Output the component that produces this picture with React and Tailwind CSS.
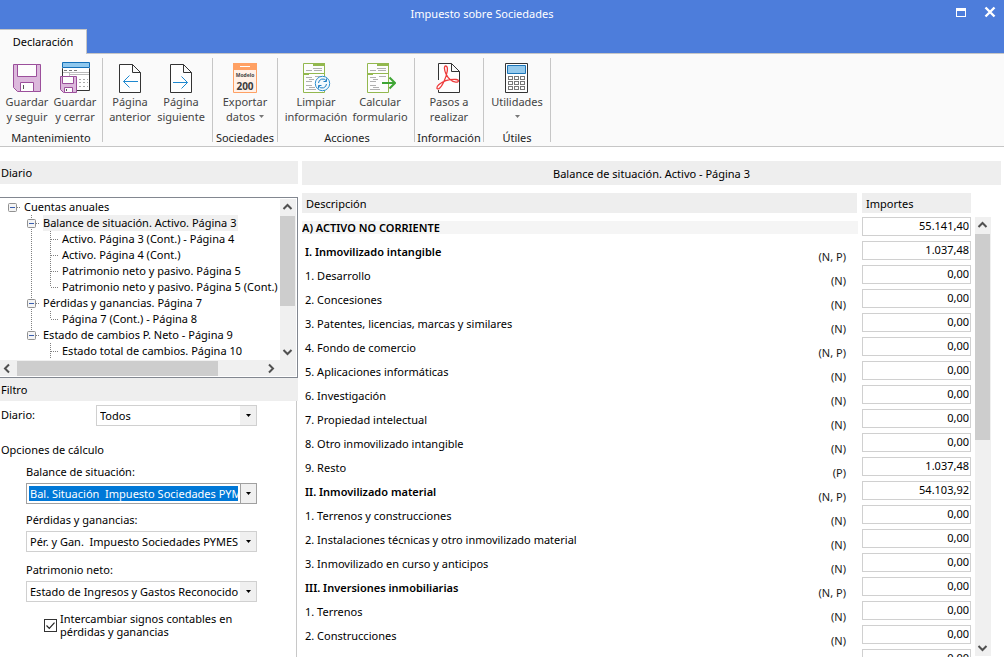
import React from "react";

/* ---------- Ribbon icons (32 × 32) ---------- */

function Icon({ children }) {
  return (
    <svg width="32" height="32" viewBox="0 0 32 32" fill="none" aria-hidden="true" className="shrink-0">
      {children}
    </svg>
  );
}

function SaveIcon() {
  return (
    <Icon>
      <path d="M2.500 2.500h27v27H6.500l-4-4z" fill="#dcb8dc" stroke="#9b4f9b" />
      <path d="M6.500 2.500h19v12h-19zM9.500 29.500v-9h13v9z" fill="#fdfdfd" stroke="#9b4f9b" />
      <path d="M12.500 23v4" stroke="#555" />
    </Icon>
  );
}

function SaveCloseIcon() {
  return (
    <Icon>
      <path d="M3.500 6.500h27v22h-27z" fill="#fff" stroke="#333" />
      <path d="M3.500 .5h27v5h-27z" fill="#8fc8ee" stroke="#1470b8" />
      <path d="M4 6h26v5H4z" fill="#fff" />
      <path d="M5 8.500h3m2 0h3m2 0h3" stroke="#777" />
      <path d="M4 10.500h26M10.500 11v4M11 12.500h19" stroke="#bbb" />
      <path d="M20 17.500h2m2 0h2m2 0h1M20 20.500h2m2 0h2m2 0h1M20 24.500h2m2 0h2m2 0h1" stroke="#aaa" />
      <path d="M1.500 14.500h16v16h-13l-3-3z" fill="#dcb8dc" stroke="#9b4f9b" />
      <path d="M3.500 14.500h11v7h-11zM5.500 30.500v-5h8v5z" fill="#fdfdfd" stroke="#9b4f9b" />
      <path d="M7.500 27v2" stroke="#555" />
    </Icon>
  );
}

function PageShape() {
  return <path d="M5.500 2.500h13l8 8v20h-21zM18.500 2.500v8h8" fill="#fefefe" stroke="#333" />;
}

function PrevPageIcon() {
  return (
    <Icon>
      <PageShape />
      <path d="M24 19.500H9.500M15.500 13.500l-6 6 6 6" stroke="#1e88cf" />
    </Icon>
  );
}

function NextPageIcon() {
  return (
    <Icon>
      <PageShape />
      <path d="M8 20.500h14.500M16.500 14.500l6 6-6 6" stroke="#1e88cf" />
    </Icon>
  );
}

function ModelIcon() {
  return (
    <Icon>
      <path d="M4.500 1.500h23v29h-23z" fill="#fff1e8" stroke="#ffa164" />
      <path d="M4 1h24v7H4z" fill="#ffa164" />
      <path d="M11 4.500h10" stroke="#fff" />
      <text x="16" y="15" textAnchor="middle" fontSize="5" fontWeight="700" fontFamily="Noto Sans, sans-serif" fill="#444">Modelo</text>
      <text x="16" y="28" textAnchor="middle" fontSize="10" fontWeight="700" fontFamily="Noto Sans, sans-serif" fill="#3c3c3c">200</text>
    </Icon>
  );
}

function FormShape() {
  return (
    <>
      <path d="M3.500 1.500h21v29h-21z" fill="#fdfdfd" stroke="#93b84f" />
      <path d="M13 1h12v3H13zM3 11h6v2H3zM3 11h22v1H3z" fill="#93b84f" />
      <path d="M13 6.500h9M6 8.500h6M14 8.500h8M6 15.500h6M15 14.500h7M9 17.500h5M6 19.500h6M6 23.500h6M9 25.500h6M6 27.500h10" stroke="#b0b0b0" />
    </>
  );
}

function CleanIcon() {
  return (
    <Icon>
      <FormShape />
      <circle cx="22.500" cy="21.500" r="7.200" fill="#f3f9fd" stroke="#2a8fd0" />
      <path d="M18.500 21a4.300 4.300 0 0 1 7.800-2.200M26.500 16.500v3h-3M26.500 22a4.300 4.300 0 0 1-7.800 2.200M18.500 26.500v-3h3" stroke="#1f7fc4" />
    </Icon>
  );
}

function CalcFormIcon() {
  return (
    <Icon>
      <FormShape />
      <path d="M18 21h13M25.500 15.500L31 21l-5.500 5.500" stroke="#3fa535" strokeWidth="2" />
    </Icon>
  );
}

function PdfIcon() {
  return (
    <Icon>
      <path d="M5.500 1.500h13l8 8v21h-21zM18.500 1.500v8h8" fill="#fefefe" stroke="#333" />
      <path d="M3 18h4v10H3z" fill="#fafafa" />
      <path
        d="M12.700 4C10.800 4 11.200 8 13 12c2 4 5.500 7.600 9.800 8.200 3.500.3 3.400-2.500.2-2.700-6-.3-13 1.700-17 5-3.300 2.800-2.300 5.300 0 4.200C9.500 24.500 13.500 14.500 14.300 9c.4-3.300-.2-5-1.600-5z"
        stroke="#ee3a3a"
        strokeWidth="1.300"
      />
    </Icon>
  );
}

function CalculatorIcon() {
  return (
    <Icon>
      <path d="M4.500 1.500h22v29h-22z" fill="#fefefe" stroke="#333" />
      <path d="M6.500 3.500h18v8h-18z" fill="#94c9ec" stroke="#1b75b8" />
      {[14.5, 19.5, 24.5].map((y) =>
        [7.5, 13.5, 19.5].map((x) => <rect key={`${x}-${y}`} x={x} y={y} width="4" height="3" stroke="#777" />)
      )}
    </Icon>
  );
}

/* ---------- Small glyphs ---------- */

function Caret({ className }) {
  return (
    <svg width="5" height="3" viewBox="0 0 5 3" aria-hidden="true" className={className}>
      <path d="M0 0h5L2.500 3z" fill="currentColor" />
    </svg>
  );
}

const chevrons = {
  up: "M1.500 7l4-4 4 4",
  down: "M1.500 4l4 4 4-4",
  left: "M7 1.500l-4 4 4 4",
  right: "M4 1.500l4 4-4 4",
};

function ScrollArrow({ dir, label }) {
  return (
    <button type="button" aria-label={label} className="flex h-[17px] w-[15px] shrink-0 items-center justify-center">
      <svg width="11" height="11" viewBox="0 0 11 11" fill="none" aria-hidden="true">
        <path d={chevrons[dir]} stroke="#505050" strokeWidth="2" />
      </svg>
    </button>
  );
}

/* ---------- Ribbon ---------- */

const groups = [
  {
    name: "Mantenimiento",
    className: "px-[3px]",
    items: [
      { lines: ["Guardar", "y seguir"], icon: SaveIcon, width: "w-12" },
      { lines: ["Guardar", "y cerrar"], icon: SaveCloseIcon, width: "w-12" },
    ],
  },
  {
    name: "",
    className: "pl-px pr-[6px]",
    items: [
      { lines: ["Página", "anterior"], icon: PrevPageIcon, width: "w-[52px]" },
      { lines: ["Página", "siguiente"], icon: NextPageIcon, width: "w-[50px]" },
    ],
  },
  {
    name: "Sociedades",
    className: "",
    items: [{ lines: ["Exportar", "datos"], icon: ModelIcon, width: "w-16", menu: true }],
  },
  {
    name: "Acciones",
    className: "pl-[5px] pr-[3px]",
    items: [
      { lines: ["Limpiar", "información"], icon: CleanIcon, width: "w-[66px]" },
      { lines: ["Calcular", "formulario"], icon: CalcFormIcon, width: "w-[62px]" },
    ],
  },
  {
    name: "Información",
    className: "",
    items: [{ lines: ["Pasos a", "realizar"], icon: PdfIcon, width: "w-[68px]" }],
  },
  {
    name: "Útiles",
    className: "",
    items: [{ lines: ["Utilidades", ""], icon: CalculatorIcon, width: "w-[66px]", menu: true }],
  },
];

function RibbonButton({ item }) {
  const Glyph = item.icon;
  return (
    <button type="button" className={`flex flex-col items-center text-[#444] ${item.width}`}>
      <Glyph />
      <span className="whitespace-nowrap leading-[15px]">{item.lines[0]}</span>
      <span className="flex h-[15px] items-center gap-1 whitespace-nowrap leading-[15px]">
        {item.lines[1] && <span>{item.lines[1]}</span>}
        {item.menu && <Caret className="text-[#777]" />}
      </span>
    </button>
  );
}

function Ribbon() {
  return (
    <div className="flex h-[93px] shrink-0 border-b border-[#c6c6c6] bg-[#fafafa]">
      {groups.map((g, i) => (
        <section key={i} className="flex">
          <div className={`flex flex-col items-center pt-2 ${g.className}`}>
            <div className="flex">
              {g.items.map((item) => (
                <RibbonButton key={item.lines.join(" ")} item={item} />
              ))}
            </div>
            <h2 className="mt-[7px] whitespace-nowrap leading-[14px] text-[#222]">{g.name}</h2>
          </div>
          <div className="my-1 w-px bg-[#c6c6c6]" />
        </section>
      ))}
    </div>
  );
}

/* ---------- Tree ---------- */

const treeRows = [
  { text: "Cuentas anuales", cells: ["root"] },
  { text: "Balance de situación. Activo. Página 3", cells: ["", "box"], selected: true },
  { text: "Activo. Página 3 (Cont.) - Página 4", cells: ["", "line", "leaf"] },
  { text: "Activo. Página 4 (Cont.)", cells: ["", "line", "leaf"] },
  { text: "Patrimonio neto y pasivo. Página 5", cells: ["", "line", "leaf"] },
  { text: "Patrimonio neto y pasivo. Página 5 (Cont.)", cells: ["", "line", "last"] },
  { text: "Pérdidas y ganancias. Página 7", cells: ["", "box"] },
  { text: "Página 7 (Cont.) - Página 8", cells: ["", "line", "last"] },
  { text: "Estado de cambios P. Neto - Página 9", cells: ["", "lastbox"] },
  { text: "Estado total de cambios. Página 10", cells: ["", "", "leaf"] },
];

function TreeCell({ kind }) {
  const lines = {
    root: "M12 8.500h4",
    box: "M7.500 0v16M12 8.500h4",
    lastbox: "M7.500 0v4M12 8.500h4",
    line: "M7.500 0v16",
    leaf: "M7.500 0v16M8 8.500h8",
    last: "M7.500 0v8M8 8.500h8",
  };
  const hasBox = kind === "root" || kind === "box" || kind === "lastbox";
  return (
    <svg width="19" height="16" viewBox="0 0 19 16" fill="none" aria-hidden="true" className="shrink-0">
      {kind && <path d={lines[kind]} stroke="#808080" strokeDasharray="1 1" />}
      {hasBox && (
        <>
          <rect x="3.500" y="4.500" width="8" height="8" rx="1" fill="#f4f4f4" stroke="#919191" />
          <path d="M5 8.500h5" stroke="#3b5fae" />
        </>
      )}
    </svg>
  );
}

function Tree() {
  return (
    <div className="mt-[13px] border-y border-r border-[#828790] bg-white pt-px pr-px pb-px">
      <div className="flex">
        <ul role="tree" aria-label="Diario" className="h-[161px] min-w-0 flex-1 overflow-hidden pl-[5px]">
          {treeRows.map((row) => (
            <li key={row.text} role="treeitem" aria-level={row.cells.length} aria-selected={!!row.selected} className="flex h-4 whitespace-nowrap">
              {row.cells.map((kind, i) => (
                <TreeCell key={i} kind={kind} />
              ))}
              <span className={row.selected ? "bg-[#f0f0f0] pr-[2px] leading-4" : "leading-4"}>{row.text}</span>
            </li>
          ))}
        </ul>
        <div className="flex w-4 flex-col bg-[#f0f0f0]">
          <ScrollArrow dir="up" label="Subir" />
          <div className="h-[90px] w-[15px] bg-[#cdcdcd]" />
          <div className="flex-1" />
          <ScrollArrow dir="down" label="Bajar" />
        </div>
      </div>
      <div className="flex h-4 items-center bg-[#f0f0f0]">
        <ScrollArrow dir="left" label="Izquierda" />
        <div className="ml-[2px] h-[15px] w-[201px] bg-[#cdcdcd]" />
        <div className="flex-1" />
        <ScrollArrow dir="right" label="Derecha" />
        <div className="w-[18px]" />
      </div>
    </div>
  );
}

/* ---------- Filter ---------- */

function Combo({ id, value, active, className = "" }) {
  return (
    <div className={`flex h-[21px] border ${active ? "border-[#a0a0a0]" : "border-[#d0d0d0]"} bg-white ${className}`}>
      <select
        id={id}
        defaultValue={value}
        className={
          active
            ? "my-[2px] mr-[2px] ml-[2px] min-w-0 flex-1 appearance-none overflow-hidden bg-[#0078d7] pl-px leading-[15px] text-white outline-none"
            : "my-[2px] mr-px ml-[3px] min-w-0 flex-1 appearance-none overflow-hidden bg-white leading-[15px] outline-none"
        }
      >
        <option value={value}>{value}</option>
      </select>
      <span className={`flex w-4 shrink-0 items-center justify-center bg-[#f0f0f0] ${active ? "border-l border-[#a0a0a0]" : ""}`}>
        <Caret className="text-black" />
      </span>
    </div>
  );
}

function Filter() {
  return (
    <div className="mr-px flex-1 border-r border-[#c8c8c8] pt-1">
      <div className="flex items-center pl-px">
        <label htmlFor="diario" className="w-[95px]">Diario:</label>
        <Combo id="diario" value="Todos" className="w-[161px]" />
      </div>
      <h3 className="mt-4 pl-px leading-4">Opciones de cálculo</h3>
      <div className="flex w-[257px] flex-col pl-[26px]">
        <label htmlFor="balance" className="mt-[6px] mb-[3px] leading-4">Balance de situación:</label>
        <Combo id="balance" value={"Bal. Situación\u00a0 Impuesto Sociedades PYMES"} active />
        <label htmlFor="perdidas" className="mt-2 mb-[3px] leading-4">Pérdidas y ganancias:</label>
        <Combo id="perdidas" value={"Pér. y Gan.\u00a0 Impuesto Sociedades PYMES"} />
        <label htmlFor="patrimonio" className="mt-[10px] mb-[3px] leading-4">Patrimonio neto:</label>
        <Combo id="patrimonio" value="Estado de Ingresos y Gastos Reconocido" />
      </div>
      <label className="mt-[10px] flex items-center gap-[3px] pl-[44px] leading-[13px]">
        <span className="grid shrink-0">
          <input type="checkbox" defaultChecked className="col-start-1 row-start-1 size-[13px] appearance-none border border-[#333] bg-white" />
          <svg width="13" height="13" viewBox="0 0 13 13" fill="none" aria-hidden="true" className="pointer-events-none col-start-1 row-start-1">
            <path d="M2.500 6.500l2.800 2.800 5.200-5.600" stroke="#222" strokeWidth="1.200" />
          </svg>
        </span>
        <span className="w-[190px]">Intercambiar signos contables en pérdidas y ganancias</span>
      </label>
    </div>
  );
}

/* ---------- Balance table ---------- */

const rows = [
  { text: "A) ACTIVO NO CORRIENTE", note: "", amount: "55.141,40", kind: "total" },
  { text: "I. Inmovilizado intangible", note: "(N, P)", amount: "1.037,48", kind: "section" },
  { text: "1. Desarrollo", note: "(N)", amount: "0,00" },
  { text: "2. Concesiones", note: "(N)", amount: "0,00" },
  { text: "3. Patentes, licencias, marcas y similares", note: "(N)", amount: "0,00" },
  { text: "4. Fondo de comercio", note: "(N, P)", amount: "0,00" },
  { text: "5. Aplicaciones informáticas", note: "(N)", amount: "0,00" },
  { text: "6. Investigación", note: "(N)", amount: "0,00" },
  { text: "7. Propiedad intelectual", note: "(N)", amount: "0,00" },
  { text: "8. Otro inmovilizado intangible", note: "(N)", amount: "0,00" },
  { text: "9. Resto", note: "(P)", amount: "1.037,48" },
  { text: "II. Inmovilizado material", note: "(N, P)", amount: "54.103,92", kind: "section" },
  { text: "1. Terrenos y construcciones", note: "(N)", amount: "0,00" },
  { text: "2. Instalaciones técnicas y otro inmovilizado material", note: "(N)", amount: "0,00" },
  { text: "3. Inmovilizado en curso y anticipos", note: "(N)", amount: "0,00" },
  { text: "III. Inversiones inmobiliarias", note: "(N, P)", amount: "0,00", kind: "section" },
  { text: "1. Terrenos", note: "(N)", amount: "0,00" },
  { text: "2. Construcciones", note: "(N)", amount: "0,00" },
  { text: "", note: "", amount: "0,00" },
];

const rowStyles = {
  total: "bg-[#f5f5f5] font-semibold",
  section: "pl-[3px] font-semibold",
  item: "pl-[3px]",
};

function BalanceTable() {
  return (
    <table className="min-w-0 flex-1 table-fixed self-start border-collapse">
      <colgroup>
        <col />
        <col className="w-[109px]" />
      </colgroup>
      <thead>
        <tr className="h-6 text-left align-top">
          <th scope="col" className="p-0 pr-[5px] font-normal">
            <div className="h-5 bg-[#eee] pl-1 leading-[21px]">Descripción</div>
          </th>
          <th scope="col" className="p-0 font-normal">
            <div className="h-5 bg-[#eee] pl-1 leading-[21px]">Importes</div>
          </th>
        </tr>
      </thead>
      <tbody>
        {rows.map((row, i) => (
          <tr key={i} className="h-6 align-top">
            <td className="p-0 pt-1 pr-1">
              <div className={`flex h-[13px] justify-between pr-3 leading-[13px] ${rowStyles[row.kind || "item"]}`}>
                <span>{row.text}</span>
                <span className="pt-[5px] leading-[13px] font-normal text-[#1a1a1a]">{row.note}</span>
              </div>
            </td>
            <td className="p-0">
              <input
                type="text"
                defaultValue={row.amount}
                aria-label={row.text || "Importe"}
                className="block h-[19px] w-full border border-[#d0d0d0] bg-white pr-px pb-[3px] text-right outline-none"
              />
            </td>
          </tr>
        ))}
      </tbody>
    </table>
  );
}

/* ---------- Window ---------- */

export default function App() {
  return (
    <div className="flex h-screen flex-col overflow-hidden bg-white font-['Noto_Sans','Open_Sans',sans-serif] text-[11px] text-black">
      <header className="flex shrink-0 flex-col border-b border-[#c6c6c6] bg-[#4d7ddb]">
        <div className="grid h-[29px] grid-cols-[1fr_auto_1fr] items-center">
          <h1 className="col-start-2 pr-10 text-white">Impuesto sobre Sociedades</h1>
          <div className="flex items-center justify-end gap-[18px] pr-2 pb-[6px] text-white">
            <button type="button" aria-label="Maximizar">
              <svg width="10" height="10" viewBox="0 0 10 10" className="block">
                <path d="M0 1h10v9H0zM1 4v5h8V4z" fill="currentColor" fillRule="evenodd" />
              </svg>
            </button>
            <button type="button" aria-label="Cerrar">
              <svg width="12" height="12" viewBox="0 0 12 12" className="block">
                <path d="M1.500 1.500l9 9M10.500 1.500l-9 9" stroke="currentColor" strokeWidth="2.400" />
              </svg>
            </button>
          </div>
        </div>
        <nav className="-mb-px flex">
          <button type="button" className="h-[25px] w-[87px] border-t border-r border-[#c6c6c6] bg-[#fafafa]">Declaración</button>
        </nav>
      </header>

      <Ribbon />

      <main className="flex min-h-0 flex-1 gap-1 pt-[14px] pr-[3px]">
        <aside className="flex w-[298px] shrink-0 flex-col">
          <h2 className="h-[23px] shrink-0 bg-[#eee] pl-px leading-[24px]">Diario</h2>
          <Tree />
          <h2 className="h-[23px] shrink-0 bg-[#eee] pl-px leading-[24px]">Filtro</h2>
          <Filter />
        </aside>

        <section className="flex min-w-0 flex-1 flex-col">
          <h2 className="h-6 shrink-0 bg-[#eee] text-center leading-[26px]">Balance de situación. Activo - Página 3</h2>
          <div className="mt-2 flex min-h-0 flex-1 overflow-hidden">
            <BalanceTable />
            <div className="mt-6 mr-[10px] mb-px ml-1 flex w-4 shrink-0 flex-col bg-[#f0f0f0]">
              <ScrollArrow dir="up" label="Subir" />
              <div className="h-[206px] w-[15px] bg-[#cdcdcd]" />
              <div className="flex-1" />
              <ScrollArrow dir="down" label="Bajar" />
            </div>
          </div>
        </section>
      </main>
    </div>
  );
}
